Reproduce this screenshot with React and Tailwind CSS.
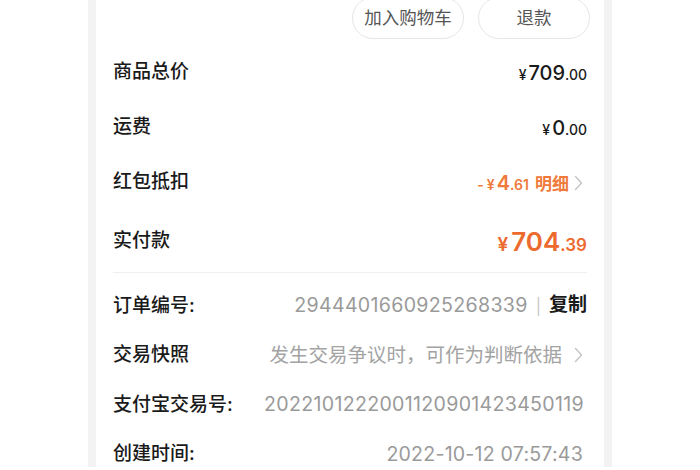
import React from 'react';

const font = { fontFamily: 'Inter, "Noto Sans CJK SC", sans-serif' };

function Chevron({ className = '' }) {
  return (
    <svg width="9" height="16" viewBox="0 0 9 16" className={className} fill="none">
      <path d="M1.5 1.5 L7.5 8 L1.5 14.5" stroke="#c4c4c4" strokeWidth="1.4" strokeLinecap="round" strokeLinejoin="round" />
    </svg>
  );
}

function Label({ children }) {
  return <span className="text-[19px] font-medium text-[#1a1a1a] whitespace-nowrap">{children}</span>;
}

export default function App() {
  return (
    <div className="w-full h-[470px] overflow-hidden bg-white" style={font}>
      <div className="ml-[88px] w-[524px] h-full bg-[#f3f3f3] px-2">
        <div className="h-full bg-white pl-[17px] pr-[17px]">
          {/* Action buttons */}
          <div className="-mt-[3px] h-[42px] flex justify-end gap-[14px] -mr-[3px]">
            {['加入购物车', '退款'].map((t) => (
              <button
                key={t}
                className="w-[112px] h-[42px] rounded-full border border-[#e6e6e6] text-[17.5px] text-[#555] bg-white"
              >
                {t}
              </button>
            ))}
          </div>

          {/* Price rows */}
          <div className="mt-[6px]">
            <div className="h-[55px] flex items-center justify-between">
              <Label>商品总价</Label>
              <span className="flex items-baseline text-[#1a1a1a] font-medium">
                <span className="text-[14px] mr-[2px]">¥</span>
                <span className="text-[20px]">709</span>
                <span className="text-[14px]">.00</span>
              </span>
            </div>
            <div className="h-[55px] flex items-center justify-between">
              <Label>运费</Label>
              <span className="flex items-baseline text-[#1a1a1a] font-medium">
                <span className="text-[14px] mr-[2px]">¥</span>
                <span className="text-[20px]">0</span>
                <span className="text-[14px]">.00</span>
              </span>
            </div>
            <div className="h-[55px] flex items-center justify-between">
              <Label>红包抵扣</Label>
              <span className="flex items-center">
                <span className="flex items-baseline text-[#ef7a3a] font-semibold">
                  <span className="text-[14px] mr-[3px]">-</span>
                  <span className="text-[14px] mr-[2px]">¥</span>
                  <span className="text-[20px]">4</span>
                  <span className="text-[14px]">.61</span>
                  <span className="text-[17px] ml-[6px]">明细</span>
                </span>
                <Chevron className="ml-[5px] mr-[4px]" />
              </span>
            </div>
            <div className="h-[62px] flex items-center justify-between">
              <Label>实付款</Label>
              <span className="flex items-baseline text-[#ec6a2e] font-semibold">
                <span className="text-[19px] mr-[3px]">¥</span>
                <span className="text-[26px]">704</span>
                <span className="text-[17px]">.39</span>
              </span>
            </div>
          </div>

          <div className="h-px bg-[#efefef]" />

          {/* Order info */}
          <div className="pt-[8px] text-[#9a9a9a]">
            <div className="h-[49.5px] flex items-center justify-between">
              <Label>订单编号:</Label>
              <span className="flex items-center">
                <span className="text-[19.6px] tracking-[0.3px]">2944401660925268339</span>
                <span className="text-[16px] text-[#c8c8c8] mx-[8px]">|</span>
                <span className="text-[19px] font-semibold text-[#1a1a1a]">复制</span>
              </span>
            </div>
            <div className="h-[49.5px] flex items-center justify-between">
              <Label>交易快照</Label>
              <span className="flex items-center">
                <span className="text-[19.5px] text-[#a3a3a3]">发生交易争议时，可作为判断依据</span>
                <Chevron className="ml-[12px] mr-[4px]" />
              </span>
            </div>
            <div className="h-[49.5px] flex items-center justify-between">
              <Label>支付宝交易号:</Label>
              <span className="text-[19.6px] tracking-[0.3px] mr-[3px]">2022101222001120901423450119</span>
            </div>
            <div className="h-[49.5px] flex items-center justify-between">
              <Label>创建时间:</Label>
              <span className="text-[19.6px] tracking-[0.2px] mr-[4px]">2022-10-12 07:57:43</span>
            </div>
          </div>
        </div>
      </div>
    </div>
  );
}
